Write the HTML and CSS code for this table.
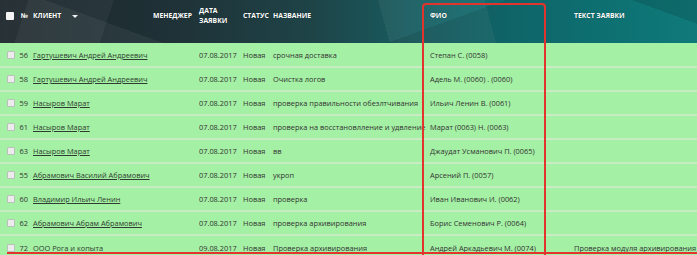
FILE: index.html
```html
<!DOCTYPE html>
<html lang="ru">
<head>
<meta charset="utf-8">
<title>Заявки</title>
<link rel="stylesheet" href="styles.css">
</head>
<body>
<div class="wrap">
  <table class="grid">
    <colgroup>
      <col class="c-chk"><col class="c-num"><col class="c-client"><col class="c-mgr"><col class="c-date"><col class="c-status"><col class="c-name"><col class="c-fio"><col class="c-text">
    </colgroup>
    <thead>
      <tr>
        <th class="chk"><span class="box box-head"></span></th>
        <th class="num">№</th>
        <th>Клиент <span class="caret"></span></th>
        <th>Менеджер</th>
        <th class="two">Дата<br>заявки</th>
        <th>Статус</th>
        <th>Название</th>
        <th>ФИО</th>
        <th class="txt">Текст заявки</th>
      </tr>
    </thead>
    <tbody>
      <tr><td class="chk"><span class="box"></span></td><td class="num">56</td><td><a href="#">Гартушевич Андрей Андреевич</a></td><td></td><td>07.08.2017</td><td>Новая</td><td>срочная доставка</td><td>Степан С. (0058)</td><td class="txt"></td></tr>
      <tr><td class="chk"><span class="box"></span></td><td class="num">58</td><td><a href="#">Гартушевич Андрей Андреевич</a></td><td></td><td>07.08.2017</td><td>Новая</td><td>Очистка логов</td><td>Адель М. (0060) . (0060)</td><td class="txt"></td></tr>
      <tr><td class="chk"><span class="box"></span></td><td class="num">59</td><td><a href="#">Насыров Марат</a></td><td></td><td>07.08.2017</td><td>Новая</td><td>проверка правильности обезлтчивания</td><td>Ильич Ленин В. (0061)</td><td class="txt"></td></tr>
      <tr><td class="chk"><span class="box"></span></td><td class="num">61</td><td><a href="#">Насыров Марат</a></td><td></td><td>07.08.2017</td><td>Новая</td><td>проверка на восстановлление и удвление</td><td>Марат (0063) Н. (0063)</td><td class="txt"></td></tr>
      <tr><td class="chk"><span class="box"></span></td><td class="num">63</td><td><a href="#">Насыров Марат</a></td><td></td><td>07.08.2017</td><td>Новая</td><td>вв</td><td>Джаудат Усманович П. (0065)</td><td class="txt"></td></tr>
      <tr><td class="chk"><span class="box"></span></td><td class="num">55</td><td><a href="#">Абрамович Василий Абрамович</a></td><td></td><td>07.08.2017</td><td>Новая</td><td>укроп</td><td>Арсений П. (0057)</td><td class="txt"></td></tr>
      <tr><td class="chk"><span class="box"></span></td><td class="num">60</td><td><a href="#">Владимир Ильич Ленин</a></td><td></td><td>07.08.2017</td><td>Новая</td><td>проверка</td><td>Иван Иванович И. (0062)</td><td class="txt"></td></tr>
      <tr><td class="chk"><span class="box"></span></td><td class="num">62</td><td><a href="#">Абрамович Абрам Абрамович</a></td><td></td><td>07.08.2017</td><td>Новая</td><td>проверка архивирования</td><td>Борис Семенович Р. (0064)</td><td class="txt"></td></tr>
      <tr><td class="chk"><span class="box"></span></td><td class="num">72</td><td><a href="#">ООО Рога и копыта</a></td><td></td><td>09.08.2017</td><td>Новая</td><td>Проверка архивирования</td><td>Андрей Аркадьевич М. (0074)</td><td class="txt">Проверка модуля архивирования</td></tr>
    </tbody>
  </table>
  <div class="mark-col"></div>
  <div class="mark-line"></div>
</div>
</body>
</html>
```

FILE: styles.css
```css
html, body {
  margin: 0;
  padding: 0;
  overflow: hidden;
  background: #a4f0a4;
}

.wrap {
  position: relative;
  width: 697px;
  height: 255px;
  overflow: hidden;
}

.grid {
  width: 697px;
  table-layout: fixed;
  border-collapse: collapse;
  font-family: "Open Sans", "Noto Sans", sans-serif;
  font-size: 7.4px;
  color: #333;
  background-color: #a4f0a4;
  background-image:
    linear-gradient(160deg, transparent 0 62%, rgba(0,0,0,0.10) 62% 100%),
    linear-gradient(108deg, transparent 0 4%, rgba(255,255,255,0.045) 4% 16%, transparent 16%),
    linear-gradient(75deg, transparent 0 55%, rgba(255,255,255,0.05) 55% 70%, transparent 70%),
    linear-gradient(200deg, rgba(0,0,0,0.12) 0 8%, transparent 8% 80%, rgba(255,255,255,0.05) 80%),
    linear-gradient(90deg, #1c262b 0%, #1f3237 25%, #1e4448 45%, #175e62 60%, #107275 75%, #0f7f80 90%, #128787 100%);
  background-size: 697px 43px;
  background-repeat: no-repeat;
}

.c-chk { width: 16px; }
.c-num { width: 14px; }
.c-client { width: 120px; }
.c-mgr { width: 46px; }
.c-date { width: 44px; }
.c-status { width: 30px; }
.c-name { width: 157px; }
.c-fio { width: 124px; }
.c-text { width: 146px; }

.grid thead th {
  height: 43px;
  box-sizing: border-box;
  padding: 0 0 11px 3px;
  text-align: left;
  vertical-align: middle;
  color: #fff;
  font-size: 6.8px;
  font-weight: 700;
  text-transform: uppercase;
  line-height: 10px;
  white-space: nowrap;
  text-shadow: 0 0 1px rgba(0,0,0,0.4);
}

.grid tbody td {
  height: 24px;
  box-sizing: border-box;
  padding: 0 0 0 3px;
  border-bottom: 2px solid #c7ecc4;
  white-space: nowrap;
  overflow: hidden;
  vertical-align: middle;
}

.grid tbody tr:last-child td {
  border-bottom: 0;
}

.grid thead .chk,
.grid tbody .chk {
  padding-left: 7px;
}

.grid thead .num {
  text-align: right;
  padding-left: 0;
  padding-right: 2px;
}

.grid tbody .num {
  text-align: right;
  padding-left: 0;
  padding-right: 2px;
}

.grid thead .txt,
.grid tbody .txt {
  padding-left: 23px;
}

.box {
  display: block;
  width: 6px;
  height: 6px;
  background: #ececec;
  border: 1px solid #b9c2b9;
  border-radius: 1px;
}

.box-head {
  width: 8px;
  height: 8px;
  margin-left: -1px;
  background: #f4f4f4;
  border: 0;
}

.caret {
  display: inline-block;
  margin-left: 9px;
  width: 0;
  height: 0;
  border-left: 3px solid transparent;
  border-right: 3px solid transparent;
  border-top: 3px solid #f2f2f2;
  vertical-align: middle;
}

.grid a {
  color: #2e3d30;
  text-decoration: underline;
}

.mark-col {
  position: absolute;
  left: 422px;
  top: 3px;
  width: 120px;
  height: 262px;
  border: 2px solid #e2342c;
  border-radius: 4px;
}

.mark-line {
  position: absolute;
  left: 7px;
  right: 0;
  top: 252px;
  height: 2px;
  background: #e2342c;
}
```
